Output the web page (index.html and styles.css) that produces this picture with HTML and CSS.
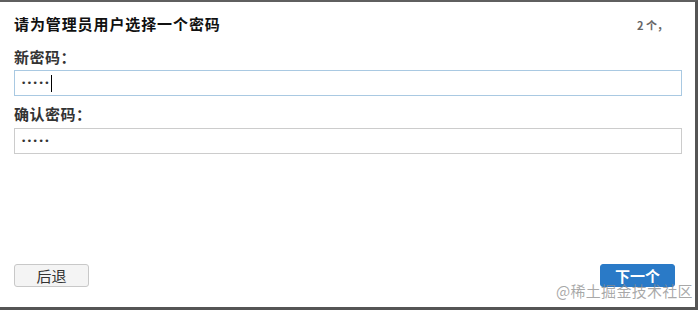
FILE: index.html
```html
<!DOCTYPE html>
<html lang="zh-CN">
<head>
    <meta charset="UTF-8">
    <title>选择密码</title>
    <link rel="stylesheet" href="styles.css">
</head>
<body>
    <div class="frame">
        <div class="dialog">
            <div class="header">
                <h1 class="title">请为管理员用户选择一个密码</h1>
                <span class="step">2 个，</span>
            </div>

            <!-- Champs mot de passe -->
            <label class="label">新密码：</label>
            <div class="field focused"><span class="dots">•••••</span><span class="caret"></span></div>
            <label class="label second">确认密码：</label>
            <div class="field"><span class="dots">•••••</span></div>

            <div class="footer">
                <button class="btn back">后退</button>
                <button class="btn next">下一个</button>
            </div>
        </div>
        <div class="watermark">@稀土掘金技术社区</div>
    </div>
</body>
</html>
```

FILE: styles.css
```css
body { margin: 0; background: #fff; font-family: "Noto Sans CJK SC", "Liberation Sans", sans-serif; }
.frame { position: relative; width: 698px; height: 310px; box-sizing: border-box; border-top: 2px solid #5f5f5f; border-right: 3px solid #555; border-bottom: 3px solid #555; background: #fff; }
.dialog { display: flex; flex-direction: column; height: 100%; box-sizing: border-box; padding: 12px 13px 20px 14px; }
.header { display: flex; justify-content: space-between; align-items: center; height: 20px; }
.title { margin: 0; font-size: 15px; font-weight: bold; color: #111; line-height: 20px; letter-spacing: 0.9px; }
.step { font-size: 11px; font-weight: bold; color: #666; margin-right: 14px; margin-top: 2px; }
.label { display: block; font-size: 15px; font-weight: bold; color: #333; line-height: 20px; margin: 13px 0 3px; letter-spacing: 0.5px; }
.label.second { margin: 8px 0 4px; }
.field { height: 26px; box-sizing: border-box; border: 1px solid #ccc; display: flex; align-items: center; padding-left: 6px; }
.field.focused { border-color: #a9c9e2; }
.dots { font-size: 9px; color: #333; letter-spacing: 0.5px; font-family: "DejaVu Sans", sans-serif; }
.caret { width: 1px; height: 17px; background: #000; margin-left: 1px; }
.footer { margin-top: auto; display: flex; justify-content: space-between; padding-right: 7px; }
.btn { width: 75px; height: 23px; border-radius: 3px; font-family: inherit; font-size: 15px; line-height: 20px; padding: 0; cursor: pointer; }
.back { background: #f4f4f4; border: 1px solid #c8c8c8; color: #333; }
.next { background: #2a7ac7; border: 1px solid #2a7ac7; color: #fff; font-weight: bold; }
.watermark { position: absolute; left: 556px; top: 278px; font-size: 15px; color: rgba(140, 140, 140, 0.75); letter-spacing: 0.3px; }
```
